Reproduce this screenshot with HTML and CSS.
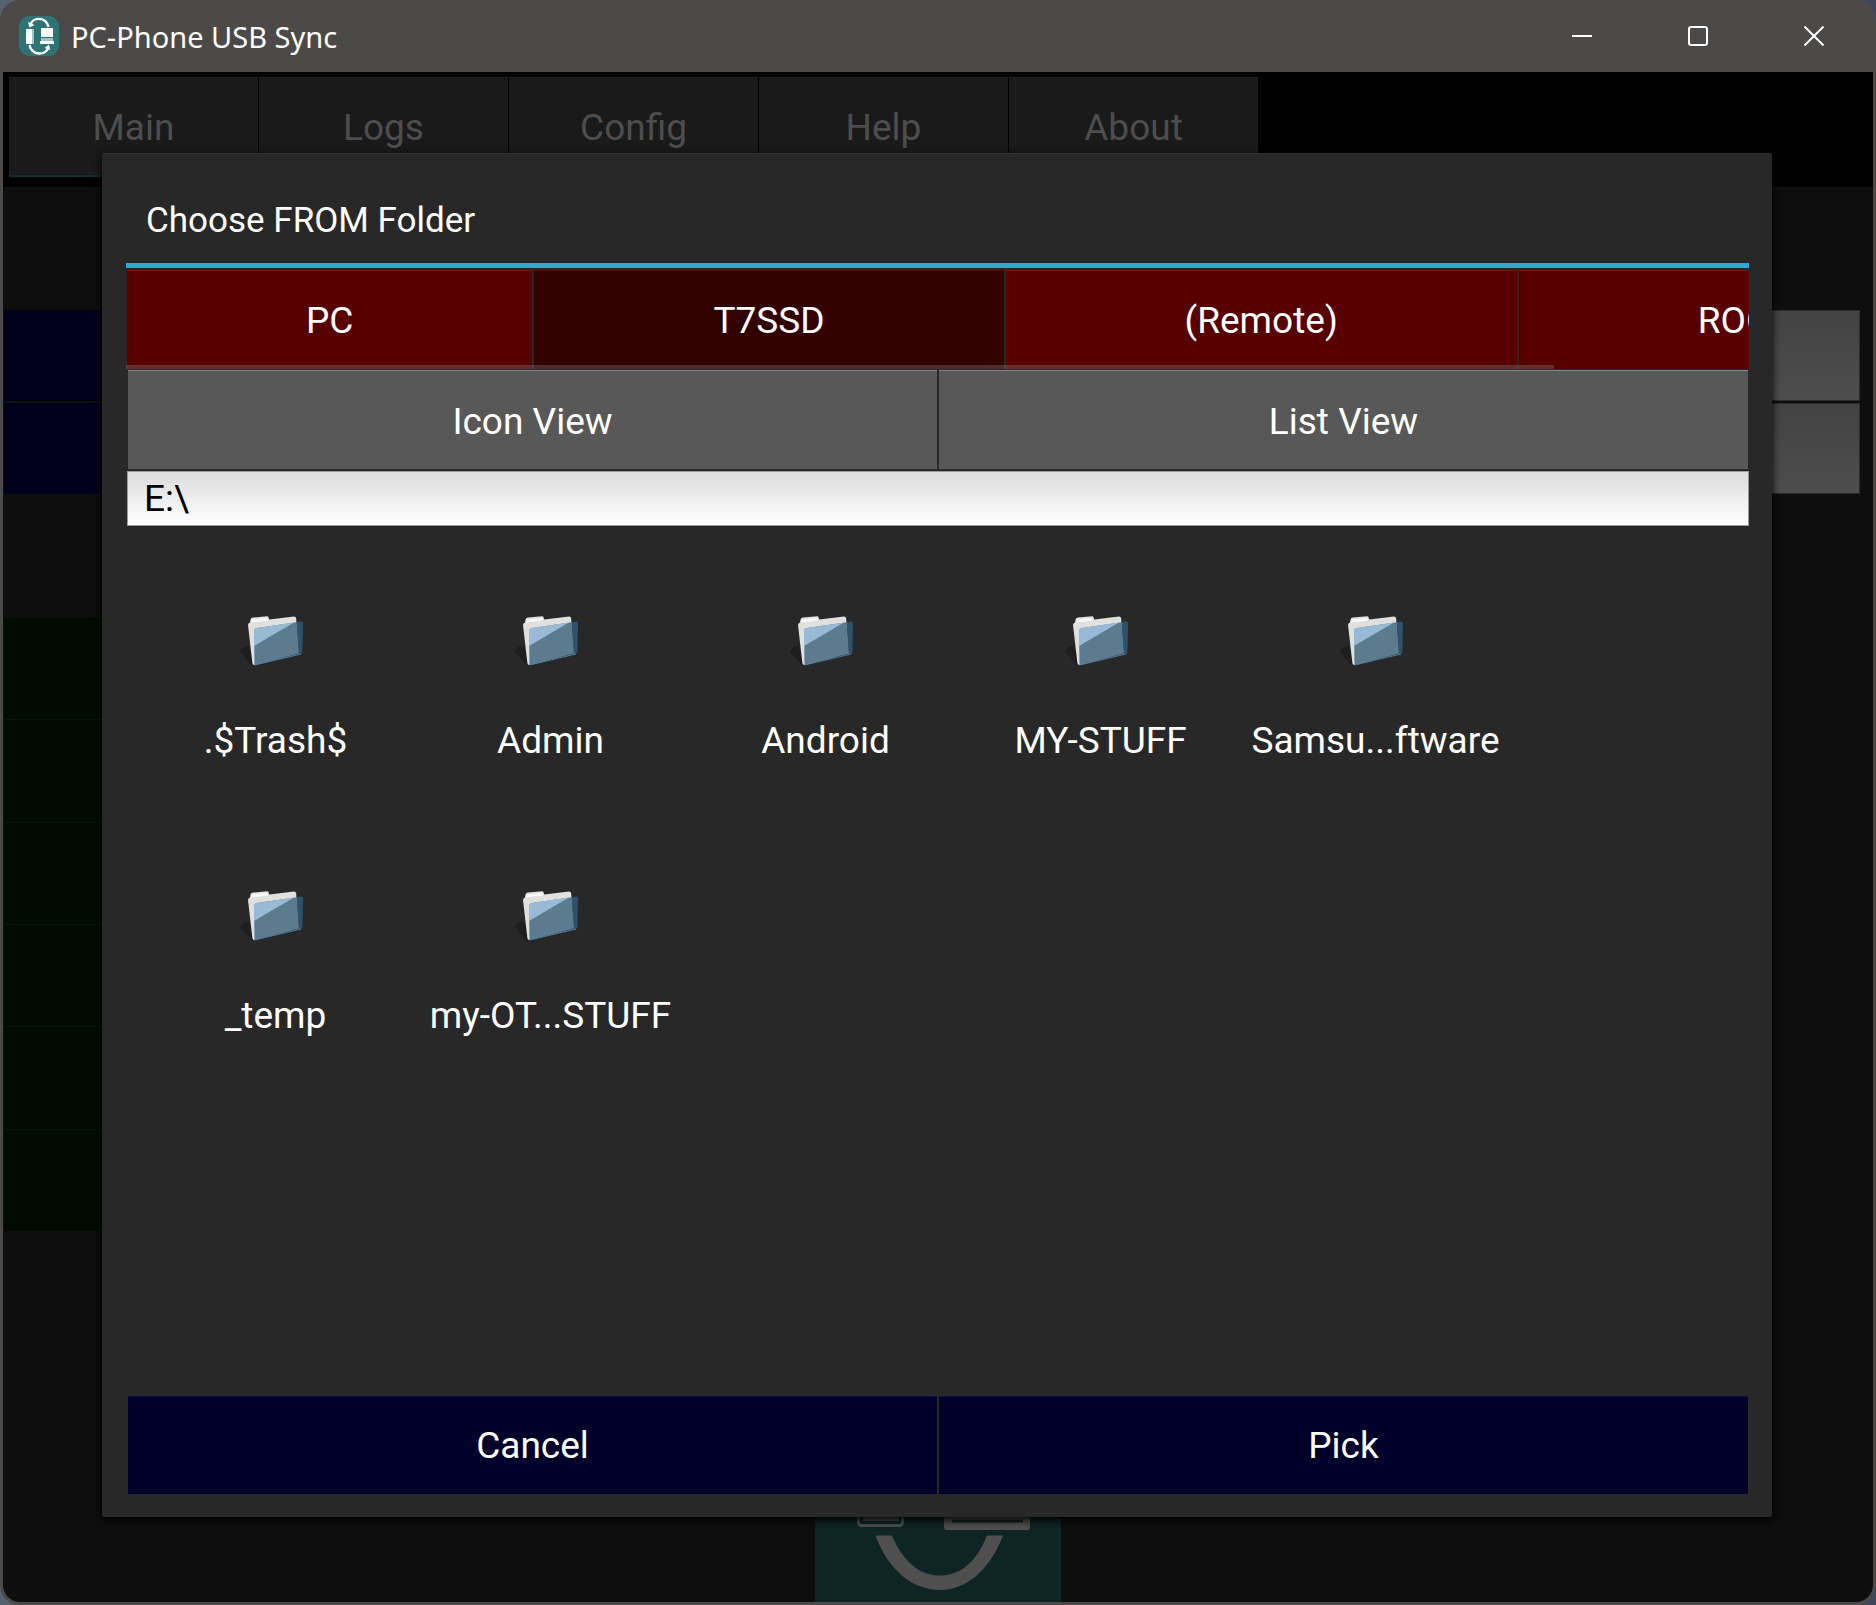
FILE: index.html
```html
<!DOCTYPE html>
<html lang="en">
<head>
<meta charset="utf-8">
<title>PC-Phone USB Sync</title>
<link rel="stylesheet" href="styles.css">
</head>
<body>
<svg class="symbols" aria-hidden="true">
  <symbol id="folder" viewBox="0 0 72 64">
    <path d="M0 35.500 L3 31 L9 30.500 L14 50 L11 49Z" fill="#1e1e1e"/>
    <path d="M8 9 Q8 7 10 6.500 L10.500 3.500 Q11 1.800 13 1.600 L27 0.300 Q28.300 0.200 28.600 1.500 L29.300 3.600 L54 0.400 Q56 0.400 56.200 2.500 L58 36 L14 49 Q12.600 49 12.400 47Z" fill="#e0e0df"/>
    <path d="M11 6.500 L12 3.500 L27 2 L28 4.500Z" fill="#f8f8f8"/>
    <path d="M56.500 6 L61.500 5.500 Q63 5.700 63 7 L62.400 37 L59 39Z" fill="#2f526c"/>
    <path d="M14 15 Q14.200 12.300 17 12 L56.500 6.200 L59 37.600 L14.500 49.300Z" fill="#5d7b8f"/>
    <path d="M14 15 Q14.200 12.300 17 12 L54 6.500 L14 30Z" fill="#98bad5"/>
    <path d="M14.500 49 L61 38" stroke="#4d83a5" stroke-width="1" fill="none"/>
  </symbol>
</svg>
<div class="window">
  <header class="titlebar">
    <svg class="app-icon" viewBox="0 0 40 40" aria-hidden="true">
      <rect width="40" height="40" rx="11" fill="#2d7474"/>
      <g fill="none" stroke="#fff" stroke-width="2.400">
        <path d="M29.500 11 C27 0.500 13.500 0.500 11.500 9"/>
        <path d="M10.500 29 C13 40 27 40 29.500 31"/>
      </g>
      <path d="M9 6 L10.500 11.500 L15.500 9Z M31 34 L30 28.500 L25.500 32Z" fill="#fff"/>
      <rect x="7" y="13" width="7" height="15" fill="#fff"/>
      <rect x="13" y="13" width="2" height="15" fill="#9fc4c4"/>
      <rect x="22" y="12" width="12" height="9" fill="#fff"/>
      <rect x="22" y="22" width="12" height="3" fill="#9fc4c4"/>
      <rect x="21" y="25" width="14" height="3" fill="#fff"/>
    </svg>
    <h1 class="app-title">PC-Phone USB Sync</h1>
    <div class="window-controls">
      <button class="window-button" aria-label="Minimize"><svg viewBox="0 0 20 20"><path d="M0 10H20"/></svg></button>
      <button class="window-button" aria-label="Maximize"><svg viewBox="0 0 20 20"><rect x="1" y="1" width="18" height="18" rx="2"/></svg></button>
      <button class="window-button" aria-label="Close"><svg viewBox="0 0 20 20"><path d="M0.500 0.500L19.500 19.500M19.500 0.500L0.500 19.500"/></svg></button>
    </div>
  </header>
  <div class="client">
    <div class="page" inert>
      <nav class="main-tabs">
        <button class="main-tab current">Main</button>
        <button class="main-tab">Logs</button>
        <button class="main-tab">Config</button>
        <button class="main-tab">Help</button>
        <button class="main-tab">About</button>
      </nav>
      <div class="paths">
        <div class="path-row"><div class="path-button"></div><div class="path-value"></div></div>
        <div class="path-row"><div class="path-button"></div><div class="path-value"></div></div>
      </div>
      <div class="actions">
        <div class="action"></div><div class="action"></div><div class="action"></div>
        <div class="action"></div><div class="action"></div><div class="action"></div>
      </div>
      <svg class="logo" viewBox="0 0 246 246" aria-hidden="true">
        <rect width="246" height="246" fill="#0f2424"/>
        <rect x="43.500" y="70" width="44" height="99.500" rx="3" fill="none" stroke="#4f4f4f" stroke-width="3"/>
        <path d="M48 80H84V165H48Z" fill="#474747"/>
        <path d="M132 154H212L215 163V171Q215 174 212 174H132Q129 174 129 171V163Z" fill="#4f4f4f"/>
        <path d="M137 165H208" stroke="#0f2424" stroke-width="3"/>
        <path d="M60.500 179.500H77C90 210 108 219.500 124.500 219.500C142 219.500 160 210 172 179.500H188C174 216 150 234 125 234C99 234 74 216 60.500 179.500Z" fill="#4f4f4f"/>
      </svg>
    </div>
    <div class="overlay">
      <section class="chooser" role="dialog" aria-labelledby="chooser-title">
        <h2 class="chooser-title" id="chooser-title">Choose FROM Folder</h2>
        <div class="drives">
          <div class="drive-list">
            <button class="drive">PC</button>
            <button class="drive selected">T7SSD</button>
            <button class="drive">(Remote)</button>
            <button class="drive">ROOT</button>
          </div>
          <div class="scroll-thumb"></div>
        </div>
        <div class="button-row">
          <button class="view-button">Icon View</button>
          <button class="view-button">List View</button>
        </div>
        <input class="path-input" type="text" aria-label="Path" value="E:\">
        <div class="files">
          <button class="file"><svg class="file-icon" aria-hidden="true"><use href="#folder"/></svg><span>.$Trash$</span></button>
          <button class="file"><svg class="file-icon" aria-hidden="true"><use href="#folder"/></svg><span>Admin</span></button>
          <button class="file"><svg class="file-icon" aria-hidden="true"><use href="#folder"/></svg><span>Android</span></button>
          <button class="file"><svg class="file-icon" aria-hidden="true"><use href="#folder"/></svg><span>MY-STUFF</span></button>
          <button class="file"><svg class="file-icon" aria-hidden="true"><use href="#folder"/></svg><span>Samsu...ftware</span></button>
          <button class="file"><svg class="file-icon" aria-hidden="true"><use href="#folder"/></svg><span>_temp</span></button>
          <button class="file"><svg class="file-icon" aria-hidden="true"><use href="#folder"/></svg><span>my-OT...STUFF</span></button>
        </div>
        <div class="button-row">
          <button class="dialog-button">Cancel</button>
          <button class="dialog-button">Pick</button>
        </div>
      </section>
    </div>
  </div>
</div>
</body>
</html>
```
FILE: styles.css
```css
* { box-sizing: border-box; }

body {
  margin: 0;
  background: linear-gradient(90deg, #56626f, #3f4659);
  font-family: Roboto, "Liberation Sans", sans-serif;
  font-size: 37px;
  color: #fff;
}

button, input {
  margin: 0;
  padding: 0;
  border: 0;
  border-radius: 0;
  font: inherit;
  color: inherit;
}

.symbols { display: none; }

.window {
  display: flex;
  flex-direction: column;
  min-height: 100vh;
  padding: 0 3px 3px;
  border-radius: 20px;
  background: #4c4a48;
  overflow: hidden;
}

.titlebar {
  display: flex;
  align-items: center;
  height: 72px;
  padding: 0 1px 0 16px;
}
.app-icon { width: 40px; height: 40px; }
.app-title {
  flex: 1;
  margin: 0 0 0 12px;
  padding-top: 1px;
  font: 400 29px/40px "Noto Sans", "Open Sans", sans-serif;
}
.window-controls { display: flex; }
.window-button {
  display: grid;
  place-items: center;
  width: 116px;
  height: 72px;
  background: none;
}
.window-button svg {
  width: 20px;
  height: 20px;
  fill: none;
  stroke: #fff;
  stroke-width: 2;
}

.client {
  position: relative;
  display: flex;
  flex: 1;
  border-radius: 0 0 17px 17px;
  background: #0e0e0e;
  overflow: hidden;
}

.page {
  display: flex;
  flex: 1;
  flex-direction: column;
}
.main-tabs {
  display: flex;
  gap: 1px;
  height: 115px;
  padding: 5px 6px 10px;
  background: #000;
}
.main-tab {
  width: 249px;
  padding-top: 2px;
  border-top: 1px solid #222;
  border-bottom: 2px solid #1a1a1a;
  background: #1a1a1a;
  color: #4d4d4d;
}
.main-tab.current { border-bottom-color: #0d2e3c; }

.paths {
  display: grid;
  gap: 2px;
  margin-top: 123px;
  padding: 0 13px 0 1px;
}
.path-row {
  display: grid;
  grid-template-columns: 1fr 3fr;
  height: 91px;
}
.path-button { background: #00001a; }
.path-value {
  border: 1px solid #2c2c2c;
  background: linear-gradient(#434343, #4d4d4d);
}

.actions {
  display: grid;
  grid-template-columns: 25%;
  grid-auto-rows: 1fr;
  height: 614px;
  margin-top: 123px;
  padding: 0 13px 0 1px;
}
.action {
  border-top: 1px solid #051805;
  background: #010b01;
}

.logo {
  width: 246px;
  height: 246px;
  margin: auto auto 0;
}

.overlay {
  position: absolute;
  inset: 0;
  display: flex;
  padding: 81px 101px 85px 99px;
}
.chooser {
  display: flex;
  flex: 1;
  flex-direction: column;
  min-width: 0;
  padding: 0 23px 23px 24px;
  border-top: 1px solid #303030;
  border-radius: 2px;
  background: #282828;
  box-shadow: 0 3px 8px #000;
}
.chooser-title {
  margin: 0;
  padding: 47px 20px 22px;
  border-bottom: 5px solid #2fa8d8;
  font-size: 35px;
  font-weight: 400;
  line-height: 40px;
}

.drives {
  position: relative;
  margin: 2px 0 1px;
  padding-left: 1px;
}
.drive-list {
  display: flex;
  gap: 2px;
  overflow: hidden;
}
.drive {
  flex: none;
  height: 99px;
  padding: 0 179px;
  border-top: 1px solid #761414;
  background: #580000;
}
.drive.selected {
  border-top-color: #4d0a0a;
  background: #330000;
}
.scroll-thumb {
  position: absolute;
  bottom: 0;
  left: 0;
  width: 88%;
  height: 4px;
  background: rgb(128 128 128 / 35%);
}

.button-row {
  display: grid;
  grid-template-columns: 1fr 1fr;
  gap: 2px;
  padding: 0 1px 0 2px;
}
.view-button {
  height: 99px;
  padding-top: 2px;
  border-top: 1px solid #858585;
  background: #585858;
}
.path-input {
  height: 55px;
  margin: 2px 0 0 1px;
  padding: 0 16px;
  border: 1px solid #999;
  background: linear-gradient(#dcdcdc, #fff);
  color: #000;
}

.files {
  display: grid;
  flex: 1;
  grid-template-columns: repeat(auto-fill, 275px);
  align-content: start;
  padding: 40px 12px;
}
.file {
  display: flex;
  flex-direction: column;
  align-items: center;
  gap: 40px;
  height: 275px;
  padding-top: 50px;
  background: none;
  line-height: 42px;
}
.file-icon { width: 72px; height: 64px; }

.dialog-button {
  height: 98px;
  border-top: 1px solid #101048;
  background: #00002b;
}
```
